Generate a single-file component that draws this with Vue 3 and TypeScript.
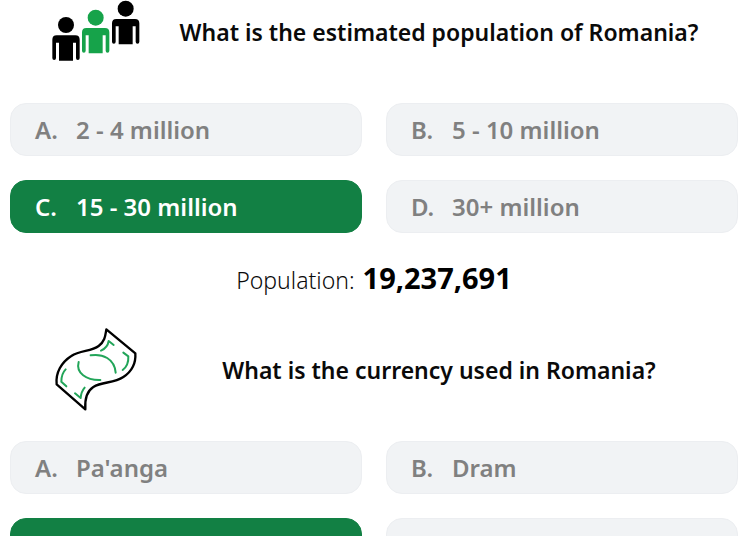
<script setup lang="ts">
import { ref } from 'vue'

interface Question {
  id: string
  title: string
  options: string[]
  fact?: { label: string; value: string }
}

const letters = ['A.', 'B.', 'C.', 'D.']

const questions: Question[] = [
  {
    id: 'population',
    title: 'What is the estimated population of Romania?',
    options: ['2 - 4 million', '5 - 10 million', '15 - 30 million', '30+ million'],
    fact: { label: 'Population:', value: '19,237,691' },
  },
  {
    id: 'currency',
    title: 'What is the currency used in Romania?',
    options: ["Pa'anga", 'Dram', 'Leu', 'Lev'],
  },
]

const selected = ref<Record<string, number>>({ population: 2, currency: 2 })

// Head centre and colour of each figure in the population icon
const people = [
  { x: 78, y: 75, color: '#000000' },
  { x: 167, y: 53, color: '#16a34a' },
  { x: 257, y: 26, color: '#000000' },
]
</script>

<template>
  <main class="quiz">
    <section v-for="q in questions" :key="q.id" class="question">
      <header class="head">
        <svg v-if="q.id === 'population'" class="icon" viewBox="36 -27 264 252" aria-hidden="true">
          <g v-for="p in people" :key="p.x" :transform="`translate(${p.x} ${p.y})`" :fill="p.color">
            <circle r="24" />
            <path
              d="M-28 31H28Q41 31 41 44V99Q41 105 35.500 105Q30 105 30 99V53H21V107H-21V53H-30V99Q-30 105 -35.500 105Q-41 105 -41 99V44Q-41 31 -28 31Z"
            />
          </g>
        </svg>
        <svg v-else class="icon" viewBox="36 33 264 252" fill="none" stroke-linecap="round" stroke-linejoin="round" aria-hidden="true">
          <path
            stroke="#000000"
            stroke-width="7"
            d="M199 34L286 106C288 135 274 161 250 177C221 197 187 190 160 207C138 221 134 244 136 274L50 199C46 165 64 133 94 114C121 96 153 101 176 84C196 69 196 51 199 34Z"
          />
          <g stroke="#22a559" stroke-width="6">
            <path d="M152 112C187 106 224 122 227 164" />
            <path d="M116 132C107 165 139 187 181 186" />
            <path d="M183 98C198 91 204 82 206 69L221 81" />
            <path d="M250 104L265 115C266 133 261 146 248 156" />
            <path d="M77 154C67 164 64 177 64 191L79 205" />
            <path d="M105 226L122 240C123 227 127 217 134 209" />
          </g>
        </svg>
        <h2 class="title">{{ q.title }}</h2>
      </header>

      <div class="options">
        <button
          v-for="(option, i) in q.options"
          :key="option"
          type="button"
          class="option"
          :class="{ chosen: selected[q.id] === i }"
          :aria-pressed="selected[q.id] === i"
          @click="selected[q.id] = i"
        >
          <span class="letter">{{ letters[i] }}</span>
          <span>{{ option }}</span>
        </button>
      </div>

      <p v-if="q.fact" class="fact">
        <span>{{ q.fact.label }}</span>
        <strong>{{ q.fact.value }}</strong>
      </p>
    </section>
  </main>
</template>

<style>
body {
  margin: 0;
  background: #ffffff;
}
</style>

<style scoped>
.quiz {
  box-sizing: border-box;
  height: 100vh;
  overflow: hidden;
  padding: 0 12px 0 10px;
  font-family: 'Segoe UI', 'Noto Sans', 'Open Sans', sans-serif;
  color: #0a0a0a;
}

.question:first-child {
  margin-top: -9px;
}

.head {
  display: flex;
  align-items: center;
  padding-left: 42px;
  margin-bottom: 28px;
}

.icon {
  flex: none;
  width: 88px;
  height: 84px;
  overflow: visible;
}

.title {
  flex: 1;
  margin: 0;
  padding-bottom: 2px;
  font-size: 23px;
  line-height: 32px;
  font-weight: 600;
  text-align: center;
}

.options {
  display: grid;
  grid-template-columns: 1fr 1fr;
  gap: 24px;
}

.option {
  display: flex;
  align-items: center;
  height: 53px;
  padding: 0 24px;
  border: 1px solid #eceef1;
  border-radius: 16px;
  background: #f1f3f5;
  color: #808080;
  font-family: inherit;
  font-size: 24px;
  line-height: 32px;
  font-weight: 600;
  text-align: left;
  cursor: pointer;
}

.option.chosen {
  border-color: #128044;
  background: #128044;
  color: #ffffff;
}

.letter {
  width: 41px;
}

.fact {
  display: flex;
  justify-content: center;
  align-items: baseline;
  gap: 8px;
  margin: 0;
  padding: 25px 0 29px;
  font-size: 23px;
  line-height: 40px;
  font-weight: 300;
}

.fact strong {
  font-size: 29px;
  font-weight: 700;
  color: #000000;
}
</style>
